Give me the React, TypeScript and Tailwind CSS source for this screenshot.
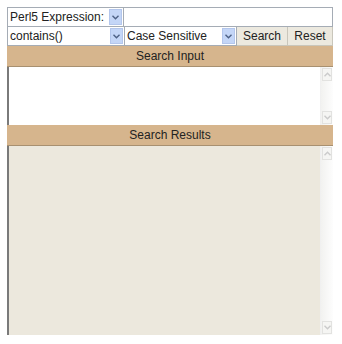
import React from "react";

const Chevron = ({ up = false }: { up?: boolean }) => (
  <svg width="7" height="5" viewBox="0 0 7 5" className={up ? "rotate-180" : ""}>
    <path d="M0.5 0.8 L3.5 3.8 L6.5 0.8" fill="none" stroke="currentColor" strokeWidth="1.4" />
  </svg>
);

// ===== select with xp style arrow =====
const FakeSelect = ({ label, className }: { label: string; className: string }) => (
  <div className={`flex items-stretch bg-white border border-[#a5acb5] ${className}`}>
    <div className="flex-1 pl-[2px] leading-none flex items-center truncate">{label}</div>
    <div className="w-[13px] m-[1px] bg-[#c4d6f7] border border-[#b3c6ec] text-[#4d6185] flex items-center justify-center">
      <Chevron />
    </div>
  </div>
);

const ScrollBar = () => (
  <div className="w-[13px] flex flex-col justify-between bg-gradient-to-r from-[#f2f2f0] to-[#fdfdfd] border-l border-[#f0f0f0]">
    <div className="h-[13px] m-[1px] bg-[#f5f5f3] border border-[#e2e2e0] text-[#cbcbcb] flex items-center justify-center">
      <Chevron up />
    </div>
    <div className="h-[13px] m-[1px] bg-[#f5f5f3] border border-[#e2e2e0] text-[#cbcbcb] flex items-center justify-center">
      <Chevron />
    </div>
  </div>
);

export default function App() {
  return (
    <div
      className="w-[342px] h-[344px] bg-white pt-[7px] pl-[7px] text-[12px] text-[#222]"
      style={{ fontFamily: '"Liberation Sans", Arial, sans-serif' }}
    >
      <div className="w-[326px] flex flex-col">
        {/* Row 1 */}
        <div className="flex h-[20px]">
          <FakeSelect label="Perl5 Expression:" className="w-[117px]" />
          <div className="flex-1 bg-white border border-[#a5acb5] border-l-0" />
        </div>

        {/* Row 2 */}
        <div className="flex h-[19px]">
          <FakeSelect label="contains()" className="w-[118px] border-t-0" />
          <FakeSelect label="Case Sensitive" className="w-[112px] border-t-0 border-l-0" />
          <button className="w-[51px] bg-[#ece9df] border border-[#c9c6bb] border-t-0 border-l-0 leading-none">
            Search
          </button>
          <button className="flex-1 bg-[#ece9df] border border-[#c9c6bb] border-t-0 border-l-0 leading-none">
            Reset
          </button>
        </div>

        {/* Search Input */}
        <div className="h-[21px] bg-[#d6b58d] flex items-center justify-center border-b border-[#a89070]">
          Search Input
        </div>
        <div className="h-[58px] flex bg-white border-l-2 border-[#7a7a7a]">
          <div className="flex-1" />
          <ScrollBar />
        </div>

        {/* Search Results */}
        <div className="h-[21px] bg-[#d6b58d] flex items-center justify-center border-b border-[#a89070]">
          Search Results
        </div>
        <div className="h-[189px] flex bg-[#ece8dd] border-l-2 border-[#7a7a7a]">
          <div className="flex-1" />
          <ScrollBar />
        </div>
      </div>
    </div>
  );
}
